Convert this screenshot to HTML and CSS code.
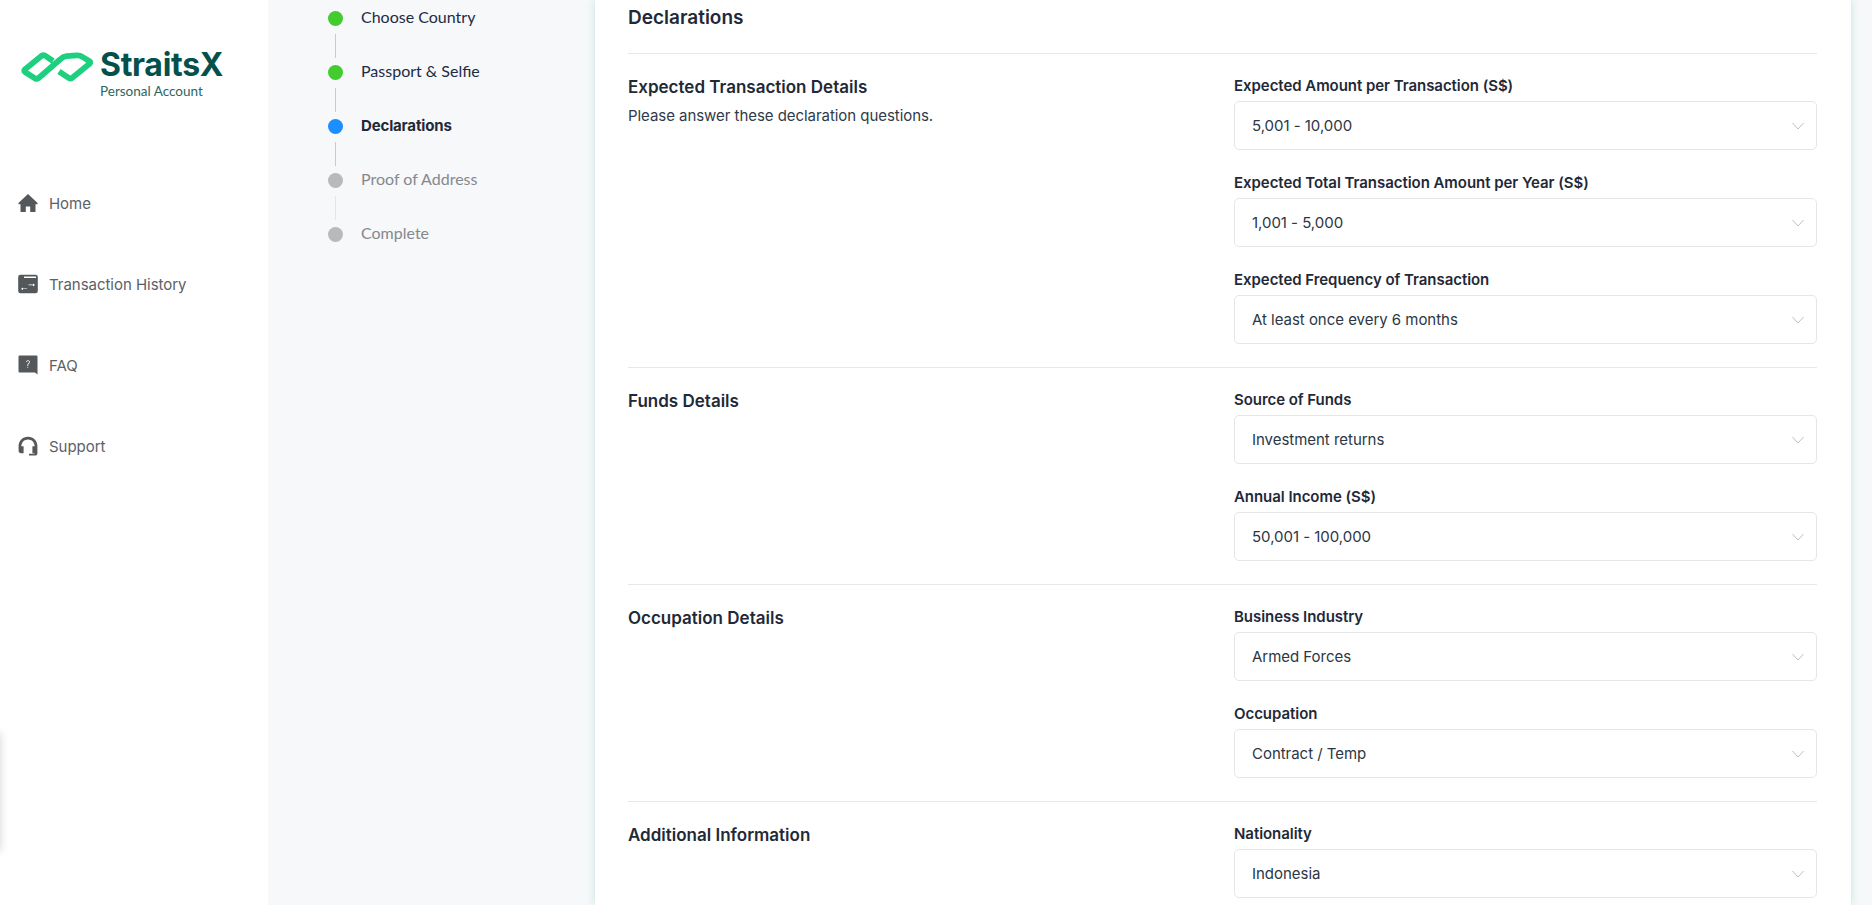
FILE: index.html
```html
<!DOCTYPE html>
<html lang="en">
<head>
<meta charset="utf-8">
<title>StraitsX</title>
<link rel="stylesheet" href="styles.css">
</head>
<body>
<div class="app">
  <aside class="sidebar">
    <div class="logo">
      <svg class="logo-mark" viewBox="0 0 72 30" fill="none" stroke="#1dd07f" stroke-width="5.8" stroke-linejoin="round" stroke-linecap="butt">
        <path d="M32 9 L24 3.6 Q22.5 2.8 21 3.6 L3.8 17.5 Q2.8 18.8 4 20 L14 26.4 Q15.8 27.4 17.4 26.2 L39 7.5 Q42 4.6 45.5 4.2 L56 3.4 Q59 3.2 61 4.6 L68.5 9.2 Q70 10.4 68.5 11.8 L51 26 Q49.5 27.2 48 26.2 L38 19.5"/>
      </svg>
      <div class="logo-text">
        <div class="logo-name">StraitsX</div>
        <div class="logo-sub">Personal Account</div>
      </div>
    </div>
    <nav class="nav">
      <a class="nav-item"><svg class="nav-icon" viewBox="0 0 20 20"><path d="M10 1 L19.8 10.2 L19 11.2 H17.5 V19 H12.2 V13.5 H7.8 V19 H2.5 V11.2 H1 L.2 10.2 Z"/></svg>Home</a>
      <a class="nav-item"><svg class="nav-icon" viewBox="0 0 20 20"><path fill-rule="evenodd" d="M2.4 .8 H17.6 A2.2 2.2 0 0 1 19.8 3 V17 A2.2 2.2 0 0 1 17.6 19.2 H2.4 A2.2 2.2 0 0 1 .2 17 V3 A2.2 2.2 0 0 1 2.4 .8 Z M6 2.6 V4 H18 V2.6 Z M10.5 10.6 V11.3 H15 V12.4 L17 11 L15 9.6 V10.6 Z M9 14.4 H5 V13.4 L3 14.8 L5 16.2 V15.1 H9 Z"/></svg>Transaction History</a>
      <a class="nav-item"><svg class="nav-icon" viewBox="0 0 20 20"><path fill-rule="evenodd" d="M1.5 .5 H18.5 A1 1 0 0 1 19.5 1.5 V19.5 L17 17.5 H1.5 A1 1 0 0 1 .5 16.5 V1.5 A1 1 0 0 1 1.5 .5 Z M9.4 11.2 V9.8 C9.4 8.6 11 8.4 11 7.1 C11 6.4 10.6 6 10 6 C9.4 6 9 6.4 8.9 7 H8.2 C8.3 6 9 5.3 10 5.3 C11.1 5.3 11.8 6 11.8 7 C11.8 8.6 10.2 8.8 10.2 10 V11.2 Z M9.4 12.2 H10.2 V13.1 H9.4 Z"/></svg>FAQ</a>
      <a class="nav-item"><svg class="nav-icon" viewBox="0 0 20 20"><path d="M10 .8 C4.4 .8 .8 5 .6 9.8 V14.8 C.6 16.2 1.6 17.2 3 17.2 H5.6 V10.2 H3.4 V9.8 C3.6 6.2 6.2 3.4 10 3.4 C13.8 3.4 16.4 6.2 16.6 9.8 V10.2 H14.4 V17.2 H16.6 V17.8 H11 V19.6 H17 C18.4 19.6 19.4 18.6 19.4 17.2 V9.8 C19.2 5 15.6 .8 10 .8 Z"/></svg>Support</a>
    </nav>
    <div class="edge-shadow"></div>
  </aside>

  <section class="steps">
    <ol class="step-list">
      <li class="step step-done">Choose Country</li>
      <li class="step step-done">Passport &amp; Selfie</li>
      <li class="step step-active">Declarations</li>
      <li class="step step-todo">Proof of Address</li>
      <li class="step step-todo step-last">Complete</li>
    </ol>
  </section>

  <main class="card">
    <h1 class="title">Declarations</h1>

    <div class="group">
      <div class="group-info">
        <h2 class="group-title">Expected Transaction Details</h2>
        <p class="group-desc">Please answer these declaration questions.</p>
      </div>
      <div class="fields">
        <div class="field"><label class="field-label">Expected Amount per Transaction (S$)</label>
          <div class="select"><span>5,001 - 10,000</span><svg class="chev" viewBox="0 0 12 8"><path d="M.5 1 L6 7 L11.5 1"/></svg></div></div>
        <div class="field"><label class="field-label">Expected Total Transaction Amount per Year (S$)</label>
          <div class="select"><span>1,001 - 5,000</span><svg class="chev" viewBox="0 0 12 8"><path d="M.5 1 L6 7 L11.5 1"/></svg></div></div>
        <div class="field"><label class="field-label">Expected Frequency of Transaction</label>
          <div class="select"><span>At least once every 6 months</span><svg class="chev" viewBox="0 0 12 8"><path d="M.5 1 L6 7 L11.5 1"/></svg></div></div>
      </div>
    </div>

    <div class="group">
      <div class="group-info"><h2 class="group-title">Funds Details</h2></div>
      <div class="fields">
        <div class="field"><label class="field-label">Source of Funds</label>
          <div class="select"><span>Investment returns</span><svg class="chev" viewBox="0 0 12 8"><path d="M.5 1 L6 7 L11.5 1"/></svg></div></div>
        <div class="field"><label class="field-label">Annual Income (S$)</label>
          <div class="select"><span>50,001 - 100,000</span><svg class="chev" viewBox="0 0 12 8"><path d="M.5 1 L6 7 L11.5 1"/></svg></div></div>
      </div>
    </div>

    <div class="group">
      <div class="group-info"><h2 class="group-title">Occupation Details</h2></div>
      <div class="fields">
        <div class="field"><label class="field-label">Business Industry</label>
          <div class="select"><span>Armed Forces</span><svg class="chev" viewBox="0 0 12 8"><path d="M.5 1 L6 7 L11.5 1"/></svg></div></div>
        <div class="field"><label class="field-label">Occupation</label>
          <div class="select"><span>Contract / Temp</span><svg class="chev" viewBox="0 0 12 8"><path d="M.5 1 L6 7 L11.5 1"/></svg></div></div>
      </div>
    </div>

    <div class="group">
      <div class="group-info"><h2 class="group-title">Additional Information</h2></div>
      <div class="fields">
        <div class="field"><label class="field-label">Nationality</label>
          <div class="select"><span>Indonesia</span><svg class="chev" viewBox="0 0 12 8"><path d="M.5 1 L6 7 L11.5 1"/></svg></div></div>
      </div>
    </div>
  </main>
</div>
</body>
</html>
```
FILE: styles.css
```css
* { box-sizing: border-box; }
html, body { margin: 0; height: 100%; overflow: hidden; }
body { font-family: Inter, "Liberation Sans", sans-serif; color: #1f2937; background: #f6f8fa; }
.app { display: flex; height: 905px; overflow: hidden; }

.sidebar { position: relative; width: 268px; flex: none; background: #fff; }
.logo { display: flex; gap: 7px; padding: 52px 0 0 21px; height: 191px; }
.logo-mark { width: 72px; height: 30px; flex: none; }
.logo-text { margin-top: -5px; }
.logo-name { font-family: Inter, sans-serif; font-weight: 700; font-size: 32px; line-height: 36px; color: #04504b; letter-spacing: -0.3px; }
.logo-sub { font-family: Lato, sans-serif; font-size: 13.5px; line-height: 16px; color: #2a6763; }
.nav { display: flex; flex-direction: column; gap: 57px; padding-left: 18px; }
.nav-item { display: flex; align-items: center; gap: 11px; height: 24px; font-size: 15px; letter-spacing: -0.03px; color: #5b6166; }
.nav-icon { width: 20px; height: 20px; fill: #54585a; flex: none; }
.edge-shadow { position: absolute; left: -10px; top: 733px; width: 10px; height: 118px; box-shadow: 0 0 10px rgba(0,0,0,.18); }

.steps { width: 327px; flex: none; padding: 0 0 0 60px; }
.step-list { list-style: none; margin: 0; padding: 0; }
.step { position: relative; height: 54px; display: flex; align-items: flex-start; font-family: Lato, sans-serif; font-size: 16px; line-height: 34px; color: #1f2a44; padding-left: 33px; }
.step::before { content: ""; position: absolute; left: 0; top: 11px; width: 15px; height: 15px; border-radius: 50%; }
.step::after { content: ""; position: absolute; left: 7px; top: 34px; width: 1px; height: 24px; background: #c9cccf; }
.step-done::before { background: #43cb2f; }
.step-active::before { background: #1a8fff; }
.step-active { font-family: Inter, sans-serif; font-weight: 700; font-size: 15px; letter-spacing: -0.15px; line-height: 36px; color: #1f2937; }
.step-todo::before { background: #b8b9bb; }
.step-todo { color: #86888d; }
.step-todo::after { background: #e4e5e7; }
.step-last::after { display: none; }

.card { width: 1256px; flex: none; background: #fff; padding: 0 34px 0 33px; box-shadow: 0 0 8px rgba(29,160,120,.22); }
.title { margin: 0; height: 53px; padding-top: 5px; font-size: 19px; line-height: 26px; font-weight: 600; color: #1f2937; }
.group { display: grid; grid-template-columns: 606px 1fr; border-top: 1px solid #e6e8ea; padding-top: 15px; padding-bottom: 23px; }
.group-info { padding-top: 2px; }
.group-title { margin: 0; font-size: 17px; line-height: 32px; font-weight: 600; color: #1f2937; }
.group-desc { margin: 0; font-size: 15px; line-height: 26px; letter-spacing: -0.05px; color: #303a48; }
.fields { display: flex; flex-direction: column; gap: 16px; }
.field-label { display: block; font-size: 15px; padding-top: 1px; line-height: 31px; font-weight: 600; letter-spacing: -0.05px; color: #1f2937; }
.select { display: flex; align-items: center; justify-content: space-between; height: 49px; border: 1px solid #e4e6e9; border-radius: 5px; padding: 0 12px 0 17px; font-size: 15px; letter-spacing: -0.03px; color: #2c3644; }
.chev { width: 12px; height: 8px; fill: none; stroke: #bdbfc2; stroke-width: 1; }
```
